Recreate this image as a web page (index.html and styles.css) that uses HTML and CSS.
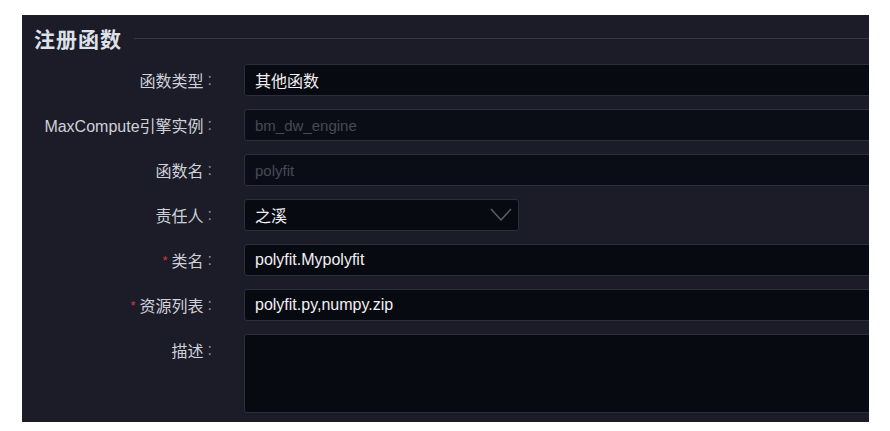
FILE: index.html
```html
<!DOCTYPE html>
<html lang="zh-CN">
<head>
  <meta charset="UTF-8" />
  <title>注册函数</title>
  <link rel="stylesheet" href="styles.css">
</head>
<body>
  <div class="panel">
    <div class="panel-title">
      <h2>注册函数</h2>
      <span class="rule"></span>
    </div>

    <form class="form">
      <label class="label">函数类型<span class="colon">:</span></label>
      <div class="field">其他函数</div>

      <label class="label">MaxCompute引擎实例<span class="colon">:</span></label>
      <div class="field disabled">bm_dw_engine</div>

      <label class="label">函数名<span class="colon">:</span></label>
      <div class="field disabled">polyfit</div>

      <label class="label">责任人<span class="colon">:</span></label>
      <div class="field select">
        <span>之溪</span>
        <svg class="arrow" width="22" height="14" viewBox="0 0 22 14">
          <polyline points="1,1 11,12 21,1" fill="none" stroke="#5f6170" stroke-width="1.4" />
        </svg>
      </div>

      <label class="label"><span class="req">*</span>类名<span class="colon">:</span></label>
      <div class="field">polyfit.Mypolyfit</div>

      <label class="label"><span class="req">*</span>资源列表<span class="colon">:</span></label>
      <div class="field">polyfit.py,numpy.zip</div>

      <label class="label top">描述<span class="colon">:</span></label>
      <div class="field area"></div>
    </form>
  </div>
</body>
</html>
```

FILE: styles.css
```css
* {
  box-sizing: border-box;
}

body {
  margin: 0;
  background: #ffffff;
  font-family: "Liberation Sans", "Noto Sans CJK SC", sans-serif;
  padding: 15px 0 0 22px;
}

.panel {
  width: 847px;
  height: 407px;
  background: #1b1c27;
  padding: 8px 0 0;
  overflow: hidden;
}

.panel-title {
  display: flex;
  align-items: center;
  padding-left: 12px;
  height: 30px;
  margin-bottom: 11px;
}

.panel-title h2 {
  margin: 0;
  font-size: 21px;
  font-weight: bold;
  color: #dfe1e8;
  letter-spacing: 1px;
}

.rule {
  flex: 1;
  height: 1px;
  background: #353746;
  margin-left: 12px;
}

.form {
  display: grid;
  grid-template-columns: 190px 1fr;
  column-gap: 32px;
  row-gap: 13px;
  margin-right: -4px;
}

.label {
  display: flex;
  align-items: center;
  justify-content: flex-end;
  height: 32px;
  font-size: 16px;
  color: #cfd1d9;
}

.label.top {
  align-self: start;
}

.colon {
  color: #8a8c96;
  margin-left: 4px;
}

.req {
  color: #d8353c;
  font-size: 13px;
  margin-right: 4px;
}

.field {
  height: 32px;
  display: flex;
  align-items: center;
  padding: 0 10px;
  background: #080a12;
  border: 1px solid #2c2e3c;
  border-radius: 3px;
  font-size: 16px;
  color: #f0f0f3;
}

.field.disabled {
  color: #474955;
  background: #0b0d16;
  font-size: 15px;
}

.field.select {
  width: 275px;
  justify-content: space-between;
}

.arrow {
  margin-right: -4px;
}

.field.area {
  height: 79px;
}
```
